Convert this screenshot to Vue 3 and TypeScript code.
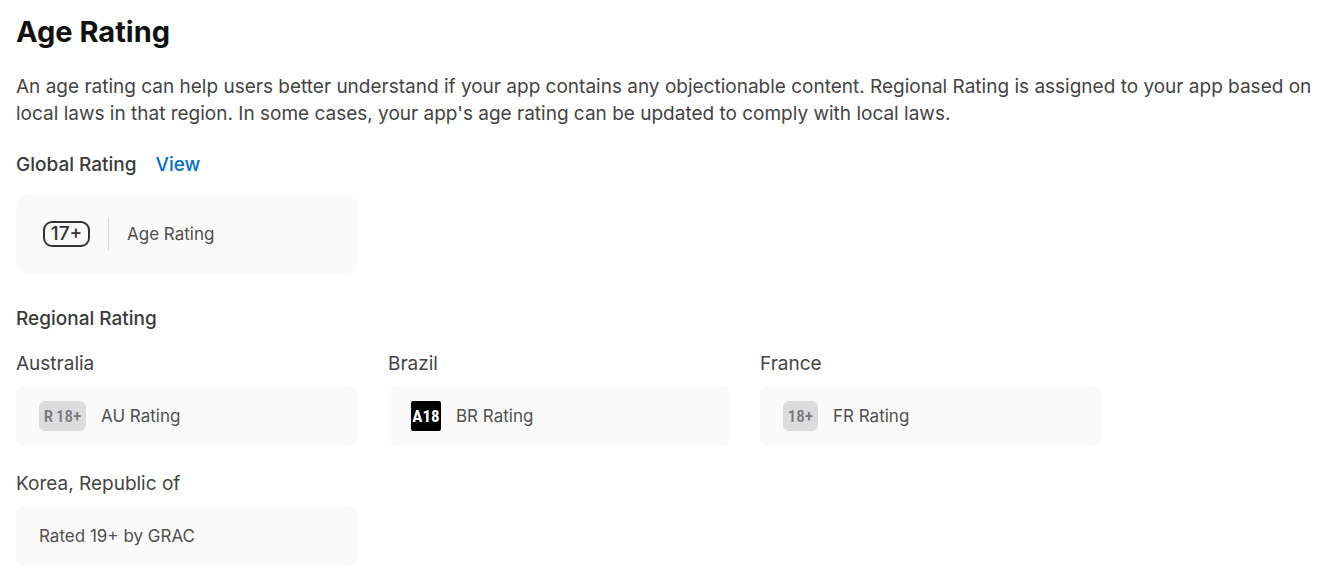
<script setup lang="ts">
interface Region {
  name: string
  badge: string
  kind: 'wide' | 'black' | 'grey' | 'none'
  label: string
}

const regions: Region[] = [
  { name: 'Australia', badge: 'R\u200918+', kind: 'wide', label: 'AU Rating' },
  { name: 'Brazil', badge: 'A18', kind: 'black', label: 'BR Rating' },
  { name: 'France', badge: '18+', kind: 'grey', label: 'FR Rating' },
  { name: 'Korea, Republic of', badge: '', kind: 'none', label: 'Rated 19+ by GRAC' },
]
</script>

<template>
  <main class="page">
    <h1>Age Rating</h1>
    <p class="intro">
      An age rating can help users better understand if your app contains any objectionable content. Regional Rating is
      assigned to your app based on local laws in that region. In some cases, your app's age rating can be updated to
      comply with local laws.
    </p>

    <div class="heading">
      <h2>Global Rating</h2>
      <a href="#">View</a>
    </div>
    <div class="grid">
      <div class="card global">
        <span class="age">17+</span>
        <span class="divider"></span>
        <span>Age Rating</span>
      </div>
    </div>

    <h2 class="regional">Regional Rating</h2>
    <div class="grid regions">
      <section v-for="region in regions" :key="region.name">
        <h3>{{ region.name }}</h3>
        <div class="card">
          <span v-if="region.kind !== 'none'" class="badge" :class="region.kind">{{ region.badge }}</span>
          <span>{{ region.label }}</span>
        </div>
      </section>
    </div>
  </main>
</template>

<style>
body {
  background: #fff;
}
</style>

<style scoped>
.page {
  padding: 12px 0 20px 16px;
  font-family: Inter, "Liberation Sans", sans-serif;
  color: #444;
}
h1,
h2,
h3,
p {
  margin: 0;
}
h1 {
  font-size: 29px;
  line-height: 40px;
  font-weight: 700;
  color: #111;
}
.intro {
  margin-top: 21px;
  font-size: 19px;
  line-height: 27px;
}
.heading {
  display: flex;
  gap: 19px;
  margin-top: 24px;
  font-size: 19px;
  line-height: 27px;
}
h2 {
  font-size: 19px;
  line-height: 27px;
  font-weight: 500;
  color: #3a3a3a;
}
a {
  color: #0070c9;
  font-weight: 500;
  text-decoration: none;
}
.grid {
  display: grid;
  grid-template-columns: repeat(3, minmax(0, 342px));
  gap: 24px 30px;
}
.card {
  display: flex;
  align-items: center;
  box-sizing: border-box;
  min-height: 60px;
  padding: 0 23px;
  gap: 15px;
  border-radius: 8px;
  background: #fafafa;
  font-size: 17px;
  line-height: 24px;
  color: #505050;
}
.global {
  margin-top: 16px;
  min-height: 80px;
  padding: 0 27px;
  gap: 18px;
  border-radius: 14px;
}
.age {
  box-sizing: border-box;
  min-width: 47px;
  border: 2px solid #333;
  border-radius: 9px;
  font-size: 19px;
  line-height: 22px;
  font-weight: 500;
  text-align: center;
  color: #333;
}
.divider {
  width: 1px;
  height: 34px;
  background: #d6d6d6;
}
.regional {
  margin-top: 31px;
}
.regions {
  margin-top: 18px;
}
h3 {
  margin-bottom: 9px;
  font-size: 19px;
  line-height: 27px;
  font-weight: 400;
}
.badge {
  border-radius: 6px;
  line-height: 30px;
  text-align: center;
  font-family: "Roboto Condensed", Roboto, sans-serif;
  font-weight: 500;
}
.wide,
.grey {
  width: 35px;
  background: #dcdcdc;
  color: #77777c;
}
.wide {
  width: 47px;
}
.black {
  width: 30px;
  border-radius: 2px;
  background: #000;
  color: #fff;
  font-weight: 700;
}
</style>
